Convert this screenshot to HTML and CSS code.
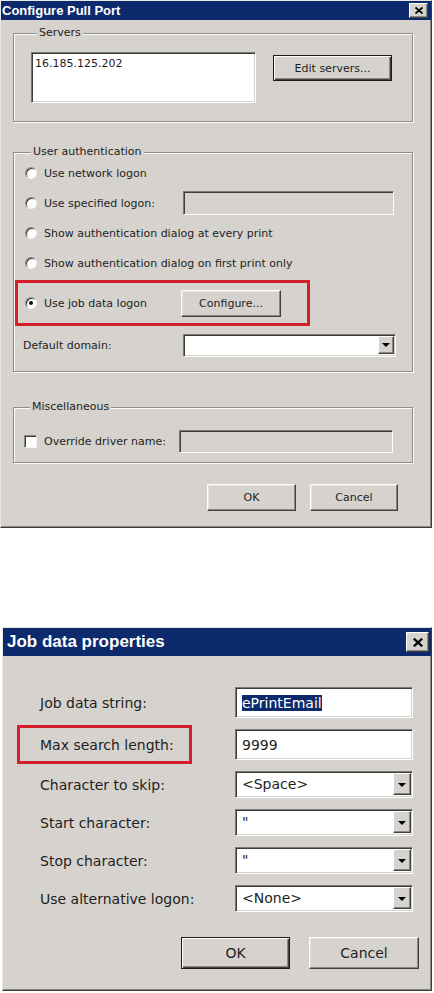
FILE: index.html
```html
<!DOCTYPE html>
<html lang="en">
<head>
  <meta charset="UTF-8">
  <title>Configure Pull Port</title>
  <link rel="stylesheet" href="styles.css">
</head>
<body>
  <div class="dialog pull-port">
    <div class="titlebar">
      <span class="title">Configure Pull Port</span>
      <span class="close-btn">
        <svg width="8" height="7" viewBox="0 0 8 7"><path d="M0.5 0.5 L7.5 6.5 M7.5 0.5 L0.5 6.5" stroke="#000" stroke-width="1.8"/></svg>
      </span>
    </div>
    <div class="dialog-body">
      <div class="group servers">
        <div class="group-title">Servers</div>
        <div class="servers-row">
          <div class="listbox">16.185.125.202</div>
          <button class="btn btn-default btn-edit">Edit servers...</button>
        </div>
      </div>

      <div class="group auth">
        <div class="group-title">User authentication</div>
        <div class="opt-row"><span class="radio"></span>Use network logon</div>
        <div class="opt-row">
          <span class="opt-label"><span class="radio"></span>Use specified logon:</span>
          <span class="textbox disabled logon-box"></span>
        </div>
        <div class="opt-row"><span class="radio"></span>Show authentication dialog at every print</div>
        <div class="opt-row"><span class="radio"></span>Show authentication dialog on first print only</div>
        <div class="marker auth-marker">
          <div class="opt-row">
            <span class="opt-label"><span class="radio checked"></span>Use job data logon</span>
            <button class="btn btn-configure">Configure...</button>
          </div>
        </div>
        <div class="opt-row domain-row">
          <span class="opt-label">Default domain:</span>
          <span class="combo domain-combo"><span class="combo-text"></span><span class="combo-arrow"></span></span>
        </div>
      </div>

      <div class="group misc">
        <div class="group-title">Miscellaneous</div>
        <div class="opt-row misc-row">
          <span class="opt-label misc-label"><span class="checkbox"></span>Override driver name:</span>
          <span class="textbox disabled driver-box"></span>
        </div>
      </div>

      <div class="button-row">
        <button class="btn btn-ok">OK</button>
        <button class="btn btn-cancel">Cancel</button>
      </div>
    </div>
  </div>

  <div class="dialog job-data">
    <div class="titlebar">
      <span class="title">Job data properties</span>
      <span class="close-btn">
        <svg width="10" height="9" viewBox="0 0 10 9"><path d="M0.8 0.6 L9.2 8.4 M9.2 0.6 L0.8 8.4" stroke="#000" stroke-width="2.2"/></svg>
      </span>
    </div>
    <div class="dialog-body">
      <div class="prop-list">
        <div class="prop-row">
          <span class="prop-label">Job data string:</span>
          <span class="textbox prop-input"><span class="selected">ePrintEmail</span></span>
        </div>
        <div class="prop-row">
          <span class="prop-label marker search-marker">Max search length:</span>
          <span class="textbox prop-input">9999</span>
        </div>
        <div class="prop-row">
          <span class="prop-label">Character to skip:</span>
          <span class="combo prop-combo"><span class="combo-text">&lt;Space&gt;</span><span class="combo-arrow"></span></span>
        </div>
        <div class="prop-row">
          <span class="prop-label">Start character:</span>
          <span class="combo prop-combo"><span class="combo-text">"</span><span class="combo-arrow"></span></span>
        </div>
        <div class="prop-row">
          <span class="prop-label">Stop character:</span>
          <span class="combo prop-combo"><span class="combo-text">"</span><span class="combo-arrow"></span></span>
        </div>
        <div class="prop-row">
          <span class="prop-label">Use alternative logon:</span>
          <span class="combo prop-combo"><span class="combo-text">&lt;None&gt;</span><span class="combo-arrow"></span></span>
        </div>
      </div>

      <div class="button-row">
        <button class="btn btn-default btn-ok">OK</button>
        <button class="btn btn-cancel">Cancel</button>
      </div>
    </div>
  </div>
</body>
</html>
```

FILE: styles.css
```css
body {
  margin: 0;
  background: #fff;
  font-family: "DejaVu Sans", Tahoma, sans-serif;
  color: #1e1e1e;
}
.dialog {
  box-sizing: border-box;
  background: #d6d3ce;
  border: 1px solid;
  border-color: #e9e7e3 #3c3c3c #3c3c3c #e9e7e3;
  box-shadow: inset -1px -1px 0 #8a8884;
}
.titlebar {
  display: flex;
  align-items: center;
  justify-content: space-between;
  background: #0c2a6c;
  color: #fff;
  font-family: "Liberation Sans", Arial, sans-serif;
  font-weight: bold;
}
.close-btn {
  box-sizing: border-box;
  display: flex;
  align-items: center;
  justify-content: center;
  background: #d6d3ce;
  border: 1px solid;
  border-color: #fff #404040 #404040 #fff;
  box-shadow: inset -1px -1px 0 #8a8884;
}

/* top dialog */
.pull-port {
  width: 432px;
  height: 528px;
  font-size: 11px;
}
.pull-port .titlebar {
  height: 19px;
  padding: 0 3px 0 1px;
  font-size: 13px;
}
.pull-port .close-btn {
  width: 19px;
  height: 15px;
}
.pull-port .dialog-body {
  padding: 13px 0 0 12px;
}
.group {
  box-sizing: border-box;
  width: 400px;
  border: 1px solid #8f8d89;
  box-shadow: inset 1px 1px 0 #fbfbfa, 1px 1px 0 #fbfbfa;
}
.group-title {
  display: table;
  margin: -8px 0 0 6px;
  padding: 0 2px;
  line-height: 13px;
  background: #d6d3ce;
}
.servers {
  height: 89px;
  padding-left: 17px;
}
.servers-row {
  display: flex;
  align-items: flex-start;
  margin-top: 13px;
}
.listbox {
  box-sizing: border-box;
  width: 225px;
  height: 51px;
  padding: 4px 3px;
  background: #fff;
  border: 1px solid;
  border-color: #7a7874 #fff #fff #7a7874;
  box-shadow: inset 1px 1px 0 #3c3c3c, inset -1px -1px 0 #d6d3ce;
}
.btn {
  box-sizing: border-box;
  padding: 0;
  font: inherit;
  color: inherit;
  background: #d6d3ce;
  border: 1px solid;
  border-color: #fff #404040 #404040 #fff;
  box-shadow: inset -1px -1px 0 #8a8884, inset 1px 1px 0 #e6e4e0;
}
.btn-default {
  border: 1px solid #1a1a1a;
  box-shadow: inset 1px 1px 0 #fff, inset -1px -1px 0 #404040, inset -2px -2px 0 #8a8884;
}
.btn-edit {
  width: 119px;
  height: 26px;
  margin: 3px 0 0 17px;
}

.auth {
  height: 220px;
  margin-top: 30px;
  padding: 0 0 0 11px;
}
.opt-row {
  display: flex;
  align-items: center;
  height: 30px;
  white-space: nowrap;
}
.opt-label {
  display: flex;
  align-items: center;
  width: 158px;
  flex: none;
}
.radio {
  box-sizing: border-box;
  display: inline-flex;
  align-items: center;
  justify-content: center;
  width: 12px;
  height: 12px;
  margin-right: 7px;
  border-radius: 50%;
  background: #fff;
  border: 1px solid;
  border-color: #8a8884 #f4f3f1 #f4f3f1 #8a8884;
  box-shadow: inset 1px 1px 0 #3c3c3c;
}
.radio.checked::after {
  content: "";
  width: 4px;
  height: 4px;
  border-radius: 50%;
  background: #111;
}
.textbox {
  box-sizing: border-box;
  display: flex;
  align-items: center;
  background: #fff;
  border: 1px solid;
  border-color: #7a7874 #fff #fff #7a7874;
  box-shadow: inset 1px 1px 0 #3c3c3c, inset -1px -1px 0 #d6d3ce;
}
.textbox.disabled {
  background: #d6d3ce;
}
.logon-box {
  width: 211px;
  height: 24px;
}
.marker {
  box-sizing: border-box;
  border: 3px solid #d4202b;
}
.auth-marker {
  width: 295px;
  margin: 2px 0 4px -10px;
  padding: 5px 0 5px 7px;
}
.btn-configure {
  width: 100px;
  height: 27px;
  margin-left: -2px;
}
.domain-row .opt-label {
  margin-left: -2px;
  width: 160px;
}
.combo {
  box-sizing: border-box;
  display: flex;
  align-items: stretch;
  background: #fff;
  border: 1px solid;
  border-color: #7a7874 #fff #fff #7a7874;
  box-shadow: inset 1px 1px 0 #3c3c3c, inset -1px -1px 0 #d6d3ce;
  padding: 1px 1px 2px 1px;
}
.combo-text {
  flex: 1;
  display: flex;
  align-items: center;
  padding-left: 4px;
}
.combo-arrow {
  box-sizing: border-box;
  width: 16px;
  display: flex;
  align-items: center;
  justify-content: center;
  background: #d6d3ce;
  border: 1px solid;
  border-color: #fff #404040 #404040 #fff;
  box-shadow: inset -1px -1px 0 #8a8884;
}
.combo-arrow::after {
  content: "";
  border-left: 4px solid transparent;
  border-right: 4px solid transparent;
  border-top: 4px solid #000;
  margin-top: 1px;
}
.domain-combo {
  width: 213px;
  height: 23px;
}

.misc {
  height: 56px;
  margin-top: 35px;
  padding-left: 10px;
}
.misc-row {
  height: 23px;
  margin-top: 17px;
}
.misc-label {
  width: 155px;
}
.checkbox {
  box-sizing: border-box;
  width: 13px;
  height: 13px;
  margin-right: 7px;
  background: #fff;
  border: 1px solid;
  border-color: #8a8884 #f4f3f1 #f4f3f1 #8a8884;
  box-shadow: inset 1px 1px 0 #3c3c3c;
}
.driver-box {
  width: 214px;
  height: 23px;
}

.button-row {
  display: flex;
  justify-content: flex-end;
}
.pull-port .button-row {
  width: 400px;
  box-sizing: border-box;
  margin-top: 21px;
  padding-right: 15px;
  gap: 14px;
}
.pull-port .btn-ok {
  width: 89px;
  height: 27px;
}
.pull-port .btn-cancel {
  width: 88px;
  height: 27px;
}

/* bottom dialog */
.job-data {
  width: 430px;
  height: 364px;
  margin: 99px 0 0 2px;
  font-size: 14px;
}
.job-data .titlebar {
  height: 28px;
  padding: 0 2px 0 4px;
  font-size: 17px;
}
.job-data .close-btn {
  width: 23px;
  height: 20px;
}
.job-data .dialog-body {
  padding: 31px 12px 0 37px;
}
.prop-list {
  display: flex;
  flex-direction: column;
  gap: 11px;
}
.prop-row {
  display: flex;
  align-items: center;
}
.prop-label {
  width: 195px;
  flex: none;
  white-space: nowrap;
}
.search-marker {
  display: flex;
  align-items: center;
  box-sizing: border-box;
  width: 175px;
  height: 39px;
  margin: -4px 43px -4px -23px;
  padding-left: 20px;
}
.prop-input {
  width: 178px;
  height: 31px;
  padding-left: 6px;
}
.selected {
  background: #0c2a6c;
  color: #fff;
}
.prop-combo {
  width: 178px;
  height: 27px;
}
.prop-combo .combo-text {
  padding-left: 5px;
}
.prop-combo .combo-arrow {
  width: 18px;
}
.job-data .button-row {
  margin-top: 25px;
  gap: 19px;
}
.job-data .btn-ok {
  width: 109px;
  height: 32px;
}
.job-data .btn-cancel {
  width: 110px;
  height: 32px;
}
```
